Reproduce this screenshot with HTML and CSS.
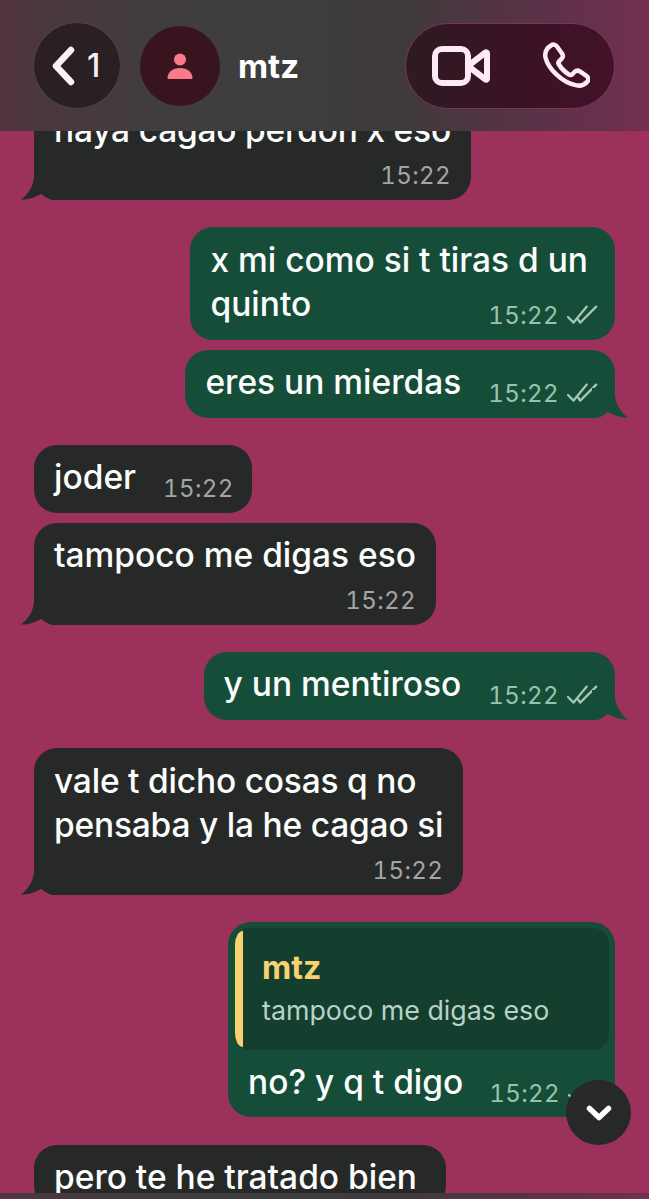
FILE: index.html
```html
<!DOCTYPE html>
<html lang="es">
<head>
<meta charset="utf-8">
<title>mtz</title>
<link rel="stylesheet" href="styles.css">
</head>
<body>
<div class="screen">
  <header class="topbar">
    <div class="back glass">
      <svg class="back-icon" viewBox="0 0 24 40" aria-hidden="true"><path d="M20 4 5 20l15 16"/></svg>
      <span>1</span>
    </div>
    <div class="avatar">
      <svg viewBox="0 0 30 30" aria-hidden="true"><circle cx="15" cy="8.500" r="6"/><path d="M2.500 27c0-6 5.500-10 12.500-10s12.500 4 12.500 10c0 .7-.5 1-1 1H3.500c-.5 0-1-.3-1-1z"/></svg>
    </div>
    <div class="name">mtz</div>
    <div class="actions">
      <svg class="video" viewBox="0 0 58 40" aria-hidden="true"><rect x="3" y="3" width="33" height="34" rx="7"/><path d="M36 20 53.500 6.500a1 1 0 0 1 1.500 .8v25.400a1 1 0 0 1-1.500 .8z"/></svg>
      <svg class="phone" viewBox="0 0 48 48" aria-hidden="true"><path d="M9 3.500c2-1.500 4.500-1 6 1l5 7c1.300 2 1 4-.6 5.500l-2.400 2.300c-.8.800-.9 1.700-.4 2.700 2.800 4.700 6 8 10.900 10.700 1 .5 1.900.4 2.700-.4l2.300-2.300c1.500-1.500 3.600-1.800 5.400-.6l6.500 4.400c2.200 1.500 2.500 4.300.7 6.100-2.500 2.700-6.200 4.300-10.400 3.500C19.500 41 6 26 3.500 15.500 2.500 10.500 5 6 9 3.500z"/></svg>
    </div>
  </header>

  <main class="chat">
    <div class="msg in first tailed">
      <svg class="tail" viewBox="0 0 36 30" aria-hidden="true"><path d="M13 0V8C12 16 7 25 0 29.500 7 30 15 27 21 23.500 24 27 28 30 33 30H36V0z"/></svg>
      <div class="text tight">haya cagao perdon x eso</div>
      <div class="meta end"><time>15:22</time></div>
    </div>

    <div class="msg out gap wrapped">
      <div class="text">x mi como si t tiras d un</div>
      <div class="line wrapped-line">
        <div class="text">quinto</div>
        <div class="meta low"><time>15:22</time><svg class="ticks" viewBox="0 0 34 24" aria-hidden="true"><path d="M1 13l6 6L21 2M12 16l2 3L31 2"/></svg></div>
      </div>
    </div>

    <div class="msg out near line tailed narrow">
      <svg class="tail" viewBox="0 0 36 30" aria-hidden="true"><path d="M23 0V8C24 16 29 25 36 29.500 29 30 21 27 15 23.500 12 27 8 30 3 30H0V0z"/></svg>
      <div class="text">eres un mierdas</div>
      <div class="meta low"><time>15:22</time><svg class="ticks" viewBox="0 0 34 24" aria-hidden="true"><path d="M1 13l6 6L21 2M12 16l2 3L31 2"/></svg></div>
    </div>

    <div class="msg in gap line narrow">
      <div class="text">joder</div>
      <div class="meta low"><time>15:22</time></div>
    </div>

    <div class="msg in near tailed">
      <svg class="tail" viewBox="0 0 36 30" aria-hidden="true"><path d="M13 0V8C12 16 7 25 0 29.500 7 30 15 27 21 23.500 24 27 28 30 33 30H36V0z"/></svg>
      <div class="text">tampoco me digas eso</div>
      <div class="meta end"><time>15:22</time></div>
    </div>

    <div class="msg out gap line tailed narrow">
      <svg class="tail" viewBox="0 0 36 30" aria-hidden="true"><path d="M23 0V8C24 16 29 25 36 29.500 29 30 21 27 15 23.500 12 27 8 30 3 30H0V0z"/></svg>
      <div class="text">y un mentiroso</div>
      <div class="meta low"><time>15:22</time><svg class="ticks" viewBox="0 0 34 24" aria-hidden="true"><path d="M1 13l6 6L21 2M12 16l2 3L31 2"/></svg></div>
    </div>

    <div class="msg in gap-lg two tailed">
      <svg class="tail" viewBox="0 0 36 30" aria-hidden="true"><path d="M13 0V8C12 16 7 25 0 29.500 7 30 15 27 21 23.500 24 27 28 30 33 30H36V0z"/></svg>
      <div class="text tight">vale t dicho cosas q no</div>
      <div class="text tight">pensaba y la he cagao si</div>
      <div class="meta end"><time>15:22</time></div>
    </div>

    <div class="msg out gap reply-msg">
      <div class="reply">
        <div class="reply-name">mtz</div>
        <div class="reply-text">tampoco me digas eso</div>
      </div>
      <div class="line reply-line">
        <div class="text">no? y q t digo</div>
        <div class="meta low"><time>15:22</time><svg class="ticks" viewBox="0 0 34 24" aria-hidden="true"><path d="M1 13l6 6L21 2M12 16l2 3L31 2"/></svg></div>
      </div>
    </div>

    <div class="msg in gap-lg last">
      <div class="text">pero te he tratado bien</div>
    </div>
  </main>

  <button class="down" type="button" aria-label="Bajar">
    <svg viewBox="0 0 26 16" aria-hidden="true"><path d="M3.500 3.500 13 12.500l9.500-9"/></svg>
  </button>

  <div class="composer-edge"></div>
</div>
</body>
</html>
```

FILE: styles.css
```css
* { box-sizing: border-box; }

html, body {
  margin: 0;
  height: 100%;
}

body {
  background: #9c315c;
  font-family: Inter, "Liberation Sans", sans-serif;
  color: #fff;
}

.screen {
  position: relative;
  width: 649px;
  height: 1199px;
  overflow: hidden;
  background: #9c315c;
}

.topbar {
  position: absolute;
  top: 0;
  left: 0;
  right: 0;
  z-index: 2;
  height: 131px;
  padding: 0 34px 0 33px;
  display: flex;
  align-items: center;
  background: linear-gradient(90deg, #50343f 0%, #423c3f 20%, #3e3e3e 40%, #3f3a3c 62%, #5e3148 85%, #72304f 100%);
}

.composer-edge {
  position: absolute;
  left: 0;
  right: 0;
  bottom: 0;
  z-index: 2;
  height: 6px;
  background: linear-gradient(90deg, #50343f 0%, #423c3f 20%, #3e3e3e 40%, #3f3a3c 62%, #5e3148 85%, #72304f 100%);
}

.back {
  width: 88px;
  height: 87px;
  padding-left: 17px;
  border-radius: 50%;
  background: #2a2024;
  border: 1px solid #4f4048;
  display: flex;
  align-items: center;
  gap: 12px;
  font-size: 32px;
  font-weight: 500;
  color: #f6eef2;
}

.back-icon {
  width: 24px;
  height: 40px;
  flex: none;
  fill: none;
  stroke: #fdf0f6;
  stroke-width: 6.500;
  stroke-linecap: round;
  stroke-linejoin: round;
}

.avatar {
  width: 80px;
  height: 80px;
  margin-left: 19px;
  border-radius: 50%;
  background: #38141f;
  display: flex;
  align-items: center;
  justify-content: center;
}

.avatar svg {
  width: 30px;
  height: 30px;
  fill: #fb7a8a;
}

.name {
  margin-left: 18px;
  font-size: 33px;
  font-weight: 700;
  color: #fff;
}

.actions {
  margin-left: auto;
  width: 210px;
  height: 86px;
  padding: 0 24px 0 26px;
  border-radius: 44px;
  background: linear-gradient(90deg, #2e1b22 0%, #3c1225 60%, #421229 100%);
  border: 1px solid #7a3557;
  display: flex;
  align-items: center;
  justify-content: space-between;
}

.video {
  width: 58px;
  height: 40px;
  fill: none;
  stroke: #fdeaf5;
  stroke-width: 6;
  stroke-linejoin: round;
}

.phone {
  width: 48px;
  height: 48px;
  fill: none;
  stroke: #fdeaf5;
  stroke-width: 4.500;
  stroke-linejoin: round;
}

.chat {
  display: flex;
  flex-direction: column;
  align-items: flex-start;
  padding: 98px 34px 0;
}

.msg {
  position: relative;
  border-radius: 23px;
  padding: 10px 20px;
  font-size: 33.500px;
  font-weight: 500;
  line-height: 44px;
  flex: none;
}

.msg.in { background: #272928; }

.msg.out {
  background: #164d39;
  align-self: flex-end;
}

.gap { margin-top: 27px; }
.gap-lg { margin-top: 28px; }
.near { margin-top: 10px; }
.first { margin-top: 0; }

.msg.two { padding-top: 11px; }

.msg.last { padding-right: 29px; }

.msg.wrapped { padding: 11px 27px 14px 20px; }

.wrapped-line { margin-right: -11px; }

.msg.line {
  display: flex;
  gap: 27px;
}

.msg.line.in { padding-right: 18px; }

.msg.line.out { padding-right: 16px; }

.msg.narrow { height: 68px; }

.line {
  display: flex;
  justify-content: space-between;
}

.text {
  white-space: nowrap;
  color: #fbfdfc;
}

.tight { letter-spacing: -.2px; }

.meta {
  display: flex;
  align-items: center;
  gap: 8px;
  font-size: 24px;
  font-weight: 400;
  font-variant-numeric: tabular-nums;
  letter-spacing: .4px;
  line-height: 28px;
  white-space: nowrap;
  color: #a3a5a4;
}

.out .meta { color: #9cc0b0; }

.end {
  justify-content: flex-end;
  margin-top: 10px;
}

.low {
  margin-top: 10px;
  margin-bottom: -10px;
}

.wrapped-line .low { margin-top: 14px; }

.ticks {
  width: 32px;
  height: 24px;
  flex: none;
  fill: none;
  stroke: #a4c6b7;
  stroke-width: 2.400;
  stroke-linecap: round;
  stroke-linejoin: round;
}

.tail {
  position: absolute;
  bottom: 0;
  width: 36px;
  height: 30px;
}

.in .tail {
  left: -13px;
  fill: #272928;
}

.out .tail {
  right: -13px;
  fill: #164d39;
}

.reply-msg {
  width: 387px;
  padding: 6px 6px 13px 7px;
}

.reply {
  position: relative;
  height: 122px;
  margin-left: 8px;
  padding: 21px 19px;
  border-radius: 0 16px 16px 0;
  background: #143f2f;
}

.reply::before {
  content: "";
  position: absolute;
  left: -8px;
  top: 3px;
  bottom: 3px;
  width: 8px;
  border-radius: 8px 0 0 8px / 14px 0 0 14px;
  background: #f9d270;
}

.reply-name {
  font-size: 32px;
  line-height: 38px;
  font-weight: 700;
  color: #f9d270;
}

.reply-text {
  margin-top: 5px;
  font-size: 26.800px;
  font-weight: 400;
  line-height: 36px;
  color: #b9d2c7;
}

.reply-line {
  padding: 10px 9px 0 13px;
}

.reply-line .low { margin-top: 14px; }

.down {
  position: absolute;
  left: 566px;
  top: 1080px;
  z-index: 1;
  width: 65px;
  height: 65px;
  padding: 0;
  border: 0;
  border-radius: 50%;
  background: #272928;
  display: flex;
  align-items: center;
  justify-content: center;
}

.down svg {
  width: 26px;
  height: 16px;
  fill: none;
  stroke: #fff;
  stroke-width: 5.500;
  stroke-linecap: round;
  stroke-linejoin: round;
}
```
